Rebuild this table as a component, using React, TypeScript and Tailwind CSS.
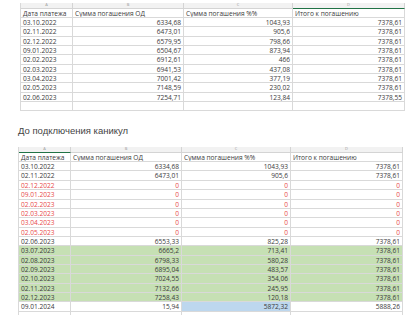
type Row = { d: string; b: string; c: string; e: string; tone?: 'red' | 'green' | 'last' }

const before: Row[] = [
  { d: '03.10.2022', b: '6334,68', c: '1043,93', e: '7378,61' },
  { d: '02.11.2022', b: '6473,01', c: '905,6', e: '7378,61' },
  { d: '02.12.2022', b: '6579,95', c: '798,66', e: '7378,61' },
  { d: '09.01.2023', b: '6504,67', c: '873,94', e: '7378,61' },
  { d: '02.02.2023', b: '6912,61', c: '466', e: '7378,61' },
  { d: '02.03.2023', b: '6941,53', c: '437,08', e: '7378,61' },
  { d: '03.04.2023', b: '7001,42', c: '377,19', e: '7378,61' },
  { d: '02.05.2023', b: '7148,59', c: '230,02', e: '7378,61' },
  { d: '02.06.2023', b: '7254,71', c: '123,84', e: '7378,55' },
]

const after: Row[] = [
  { d: '03.10.2022', b: '6334,68', c: '1043,93', e: '7378,61' },
  { d: '02.11.2022', b: '6473,01', c: '905,6', e: '7378,61' },
  { d: '02.12.2022', b: '0', c: '0', e: '0', tone: 'red' },
  { d: '09.01.2023', b: '0', c: '0', e: '0', tone: 'red' },
  { d: '02.02.2023', b: '0', c: '0', e: '0', tone: 'red' },
  { d: '02.03.2023', b: '0', c: '0', e: '0', tone: 'red' },
  { d: '03.04.2023', b: '0', c: '0', e: '0', tone: 'red' },
  { d: '02.05.2023', b: '0', c: '0', e: '0', tone: 'red' },
  { d: '02.06.2023', b: '6553,33', c: '825,28', e: '7378,61' },
  { d: '03.07.2023', b: '6665,2', c: '713,41', e: '7378,61', tone: 'green' },
  { d: '02.08.2023', b: '6798,33', c: '580,28', e: '7378,61', tone: 'green' },
  { d: '02.09.2023', b: '6895,04', c: '483,57', e: '7378,61', tone: 'green' },
  { d: '02.10.2023', b: '7024,55', c: '354,06', e: '7378,61', tone: 'green' },
  { d: '02.11.2023', b: '7132,66', c: '245,95', e: '7378,61', tone: 'green' },
  { d: '02.12.2023', b: '7258,43', c: '120,18', e: '7378,61', tone: 'green' },
  { d: '09.01.2024', b: '15,94', c: '5872,32', e: '5888,26', tone: 'last' },
]

const cols = 'grid grid-cols-[52px_111px_109px_112px]'
const cell = 'h-[9.35px] leading-[9.35px] px-[2px] border-r border-b border-[#d9d9d9] overflow-hidden whitespace-nowrap'

function Letters({ sel }: { sel: number }) {
  const l = ['A', 'B', 'C', 'D']
  return (
    <div className={cols}>
      {l.map((x, i) => (
        <div
          key={x}
          className={`h-[5.5px] leading-[4px] text-center text-[4px] text-[#9a9a9a] bg-[#f2f2f2] border-r border-[#d4d4d4] ${
            i === sel ? 'border-b-[1.5px] border-b-[#217346]' : 'border-b border-b-[#d4d4d4]'
          }`}
        >
          {x}
        </div>
      ))}
    </div>
  )
}

function Sheet({ rows, sel, extra }: { rows: Row[]; sel: number; extra: boolean }) {
  return (
    <div className="border-l border-[#d9d9d9] w-fit">
      <Letters sel={sel} />
      <div className={cols}>
        <div className={cell}>Дата платежа</div>
        <div className={cell}>Сумма погашения ОД</div>
        <div className={cell}>Сумма погашения %%</div>
        <div className={cell}>Итого к погашению</div>
      </div>
      {rows.map((r, i) => {
        const red = r.tone === 'red' ? 'text-[#e84a4a]' : ''
        const bg = r.tone === 'green' ? 'bg-[#c6e0b4]' : ''
        return (
          <div key={i} className={`${cols} ${red} ${bg}`}>
            <div className={cell}>{r.d}</div>
            <div className={`${cell} text-right`}>{r.b}</div>
            <div className={`${cell} text-right ${r.tone === 'last' ? 'bg-[#bdd7ee]' : ''}`}>{r.c}</div>
            <div className={`${cell} text-right`}>{r.e}</div>
          </div>
        )
      })}
      {extra && (
        <div className={cols}>
          <div className={cell}></div>
          <div className={cell}></div>
          <div className={cell}></div>
          <div className={cell}></div>
        </div>
      )}
    </div>
  )
}

export default function App() {
  return (
    <div
      className="w-[420px] h-[315px] overflow-hidden bg-white text-[6.6px] text-[#3a3a3a]"
      style={{ fontFamily: '"Open Sans", "Liberation Sans", sans-serif' }}
    >
      <div className="pt-[3px] pl-[20px]">
        <Sheet rows={before} sel={3} extra />
      </div>
      <div
        className="pl-[18px] pt-[13px] h-[36px] text-[9.5px] text-[#444]"
        style={{ fontFamily: '"Liberation Sans", sans-serif' }}
      >
        До подключения каникул
      </div>
      <div className="pl-[18px]">
        <Sheet rows={after} sel={0} extra />
      </div>
    </div>
  )
}
